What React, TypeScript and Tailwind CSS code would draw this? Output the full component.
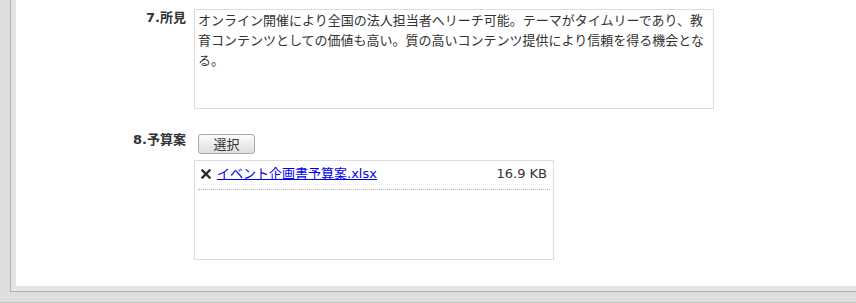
const memo =
  'オンライン開催により全国の法人担当者へリーチ可能。テーマがタイムリーであり、教\n育コンテンツとしての価値も高い。質の高いコンテンツ提供により信頼を得る機会とな\nる。';

const files = [{ name: 'イベント企画書予算案.xlsx', size: '16.9 KB' }];

const RemoveIcon = () => (
  <svg width="10" height="10" viewBox="0 0 10 10" className="shrink-0">
    <path d="M1.5 1.5 L8.5 8.5 M8.5 1.5 L1.5 8.5" stroke="#2b2b2b" strokeWidth="2.4" strokeLinecap="square" />
  </svg>
);

export default function App() {
  return (
    <div className="h-[303px] w-[856px] overflow-hidden bg-[#dedede] font-['DejaVu_Sans','Noto_Sans_CJK_JP',sans-serif] text-[13px] text-[#333]">
      {/* panel frame */}
      <div className="ml-[10px] h-[292px] border-b border-l border-[#b3b3b3] bg-[#e4e4e4] pb-[5px] pl-[5px]">
        <div className="h-full bg-white pt-[8px]">
          {/* 7. 所見 */}
          <div className="flex gap-[8px]">
            <div className="w-[170px] text-right font-bold leading-[20px]">7.所見</div>
            <textarea
              readOnly
              value={memo}
              className="mt-[1px] h-[100px] w-[520px] resize-none overflow-hidden border border-[#dcdcdc] px-[3px] pt-[1px] font-['DejaVu_Sans','Noto_Sans_CJK_JP',sans-serif] text-[13px] leading-[20px] text-[#333] outline-none"
            />
          </div>

          {/* 8. 予算案 */}
          <div className="mt-[21px] flex gap-[8px]">
            <div className="w-[170px] text-right font-bold leading-[20px]">8.予算案</div>
            <div className="flex flex-col">
              <button className="ml-[4px] mt-[4px] flex h-[20px] w-[57px] items-center justify-center rounded-[3px] border border-[#a9a9a9] bg-gradient-to-b from-[#fcfcfc] to-[#dedede] text-[13px] leading-none text-[#333]">
                選択
              </button>
              <div className="mt-[6px] h-[100px] w-[360px] border border-[#dcdcdc] px-[3px]">
                {files.map((f) => (
                  <div
                    key={f.name}
                    className="flex items-center border-b border-dotted border-[#b5b5b5] pb-[5px] pl-[3px] pr-[3px] pt-[3px] leading-[20px]"
                  >
                    <RemoveIcon />
                    <a href="#" className="ml-[6px] text-[#0000ee] underline">
                      {f.name}
                    </a>
                    <span className="ml-auto">{f.size}</span>
                  </div>
                ))}
              </div>
            </div>
          </div>
        </div>
      </div>
      <div className="mt-[10px] h-px bg-[#c4c4c4]" />
    </div>
  );
}
